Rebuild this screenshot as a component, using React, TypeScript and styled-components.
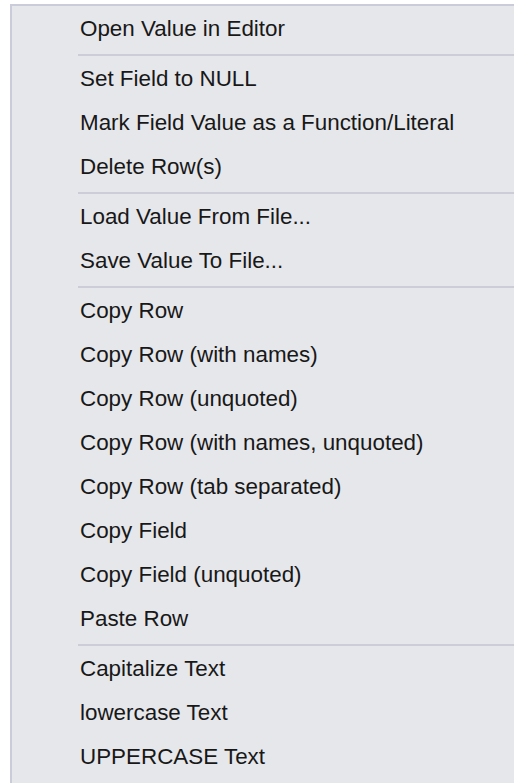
import React from "react";
import styled, { createGlobalStyle } from "styled-components";

const Global = createGlobalStyle`
  html, body {
    margin: 0;
    padding: 0;
    background: #ffffff;
    overflow: hidden;
  }
  body {
    font-family: "Liberation Sans", Arial, sans-serif;
  }
`;

const Menu = styled.div`
  margin: 4px 0 0 10px;
  background: #e6e7eb;
  border-top: 2px solid #cbccd9;
  border-left: 2px solid #cbccd9;
  display: flex;
  flex-direction: column;
  padding: 1px 0 20px;
`;

const Item = styled.div`
  height: 44px;
  display: flex;
  align-items: center;
  padding-left: 68px;
  font-size: 22.4px;
  color: #181818;
  white-space: nowrap;
  cursor: default;
`;

const Separator = styled.div`
  height: 2px;
  margin: 3px 0 1px 66px;
  background: #cdcdd9;
`;

type Entry = string | null;

const entries: Entry[] = [
  "Open Value in Editor",
  null,
  "Set Field to NULL",
  "Mark Field Value as a Function/Literal",
  "Delete Row(s)",
  null,
  "Load Value From File...",
  "Save Value To File...",
  null,
  "Copy Row",
  "Copy Row (with names)",
  "Copy Row (unquoted)",
  "Copy Row (with names, unquoted)",
  "Copy Row (tab separated)",
  "Copy Field",
  "Copy Field (unquoted)",
  "Paste Row",
  null,
  "Capitalize Text",
  "lowercase Text",
  "UPPERCASE Text",
];

export default function App() {
  return (
    <>
      <Global />
      <Menu>
        {entries.map((e, i) =>
          e === null ? <Separator key={i} /> : <Item key={i}>{e}</Item>
        )}
      </Menu>
    </>
  );
}
